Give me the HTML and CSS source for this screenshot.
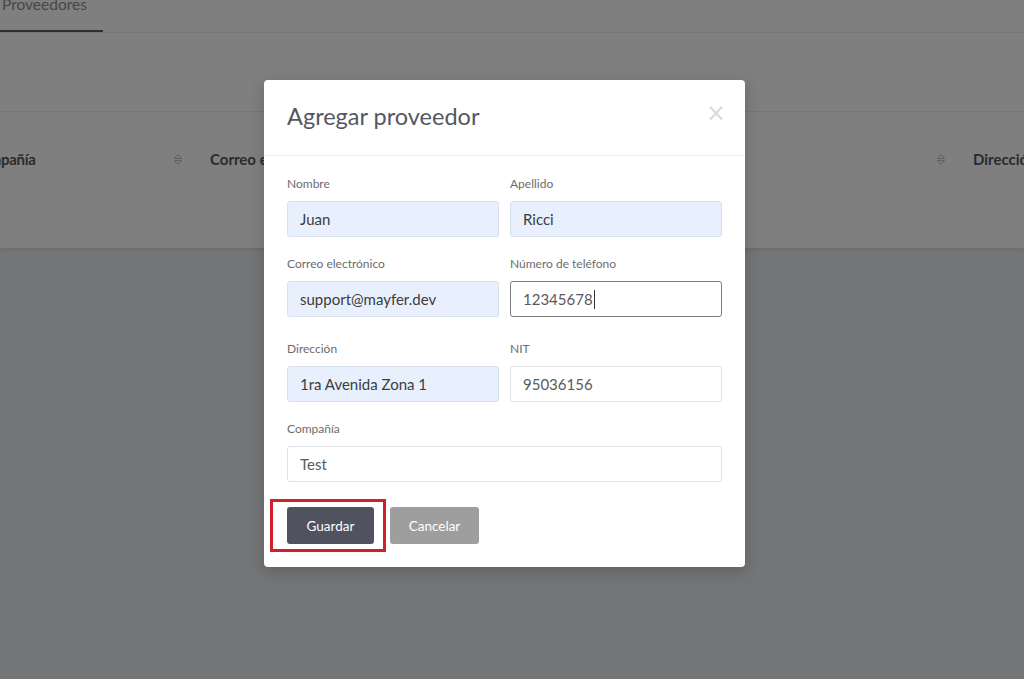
FILE: index.html
```html
<!DOCTYPE html>
<html lang="es">
  <head>
    <meta charset="UTF-8" />
    <meta name="viewport" content="width=device-width, initial-scale=1.0" />
    <title>Proveedores</title>
    <link rel="stylesheet" href="styles.css">
  </head>
  <body>
    <div class="page">
      <div class="card">
        <div class="tabs">
          <div class="tab active">Proveedores</div>
        </div>
        <div class="toolbar"></div>
        <div class="thead">
          <div class="th th-first">
            <span>Compañía</span>
            <svg class="sort" width="10" height="13" viewBox="0 0 10 13"><path d="M1.5 5.5 L5 1.5 L8.5 5.5 Z M1.5 7.5 L5 11.5 L8.5 7.5 Z" fill="none" stroke="#c0c2c8" stroke-width="1"/></svg>
          </div>
          <div class="th th-wide">
            <span>Correo electrónico</span>
            <svg class="sort" width="10" height="13" viewBox="0 0 10 13"><path d="M1.5 5.5 L5 1.5 L8.5 5.5 Z M1.5 7.5 L5 11.5 L8.5 7.5 Z" fill="none" stroke="#c0c2c8" stroke-width="1"/></svg>
          </div>
          <div class="th">
            <span>Dirección</span>
          </div>
        </div>
      </div>
    </div>

    <!-- Modal -->
    <div class="overlay">
      <div class="modal">
        <div class="modal-header">
          <h2>Agregar proveedor</h2>
          <span class="close">&times;</span>
        </div>
        <form class="modal-body" id="providerForm">
          <div class="row">
            <div class="form-group">
              <label for="nombre">Nombre</label>
              <input type="text" id="nombre" class="autofill" value="Juan" />
            </div>
            <div class="form-group">
              <label for="apellido">Apellido</label>
              <input type="text" id="apellido" class="autofill" value="Ricci" />
            </div>
          </div>
          <div class="row row-spaced">
            <div class="form-group">
              <label for="correo">Correo electrónico</label>
              <input type="email" id="correo" class="autofill" value="support@mayfer.dev" />
            </div>
            <div class="form-group">
              <label for="telefono">Número de teléfono</label>
              <div class="field-wrap">
                <input type="text" id="telefono" class="focused" value="12345678" />
                <span class="caret"></span>
              </div>
            </div>
          </div>
          <div class="row">
            <div class="form-group">
              <label for="direccion">Dirección</label>
              <input type="text" id="direccion" class="autofill" value="1ra Avenida Zona 1" />
            </div>
            <div class="form-group">
              <label for="nit">NIT</label>
              <input type="text" id="nit" value="95036156" />
            </div>
          </div>
          <div class="row">
            <div class="form-group full">
              <label for="compania">Compañía</label>
              <input type="text" id="compania" value="Test" />
            </div>
          </div>
          <div class="actions">
            <div class="highlight-wrap">
              <button type="submit" class="btn btn-primary">Guardar</button>
              <span class="highlight"></span>
            </div>
            <button type="button" class="btn btn-secondary">Cancelar</button>
          </div>
        </form>
      </div>
    </div>
  </body>
</html>
```

FILE: styles.css
```css
* {
  margin: 0;
  padding: 0;
  box-sizing: border-box;
}

body {
  font-family: Lato, "Open Sans", sans-serif;
  width: 1024px;
  height: 679px;
  overflow: hidden;
  position: relative;
}

.page {
  height: 679px;
  background: #e8eaef;
  overflow: hidden;
}

.card {
  background: white;
  height: 248px;
  box-shadow: 0 2px 4px rgba(0, 0, 0, 0.08);
}

.tabs {
  height: 33px;
  display: flex;
  align-items: flex-end;
  border-bottom: 1px solid #ededed;
}

.tab {
  font-size: 15.5px;
  line-height: 18px;
  color: #8e8e8e;
  padding: 0 0 17px 2px;
  width: 103px;
}

.tab.active {
  border-bottom: 2px solid #5d5e6a;
}

.toolbar {
  height: 79px;
  border-bottom: 1px solid #eeeeee;
}

.thead {
  display: flex;
  height: 94px;
  align-items: center;
  margin-left: -42px;
}

.th {
  flex-shrink: 0;
  display: flex;
  align-items: center;
  justify-content: space-between;
  font-size: 15px;
  font-weight: 700;
  color: #54565e;
  padding: 0 12px 0 15px;
  white-space: nowrap;
}

.th-first {
  width: 237px;
  letter-spacing: -0.3px;
}

.th-first span {
  margin-left: -2px;
}

.th-wide {
  width: 763px;
}

.sort {
  display: block;
}

/* Modal */
.overlay {
  position: absolute;
  inset: 0;
  background: rgba(0, 0, 0, 0.5);
  padding: 80px 0 0 264px;
}

.modal {
  width: 481px;
  background: white;
  border-radius: 4px;
  box-shadow: 0 4px 16px rgba(0, 0, 0, 0.2);
}

.modal-header {
  height: 76px;
  padding: 0 23px;
  display: flex;
  align-items: center;
  justify-content: space-between;
  border-bottom: 1px solid #ececec;
}

.modal-header h2 {
  font-size: 23.5px;
  font-weight: 400;
  color: #55575f;
  margin-top: -3px;
}

.close {
  font-size: 24px;
  line-height: 1;
  color: #dadada;
  margin-top: -9px;
  margin-right: -4px;
  font-family: "DejaVu Sans", sans-serif;
}

.modal-body {
  padding: 19px 23px 23px;
}

.row {
  display: flex;
  gap: 11px;
  margin-bottom: 18px;
}

.row-spaced {
  margin-bottom: 23px;
}

.form-group {
  width: 212px;
}

.form-group.full {
  width: 100%;
}

label {
  display: block;
  font-size: 12px;
  line-height: 17px;
  color: #6c6c6c;
  margin-bottom: 9px;
}

input {
  display: block;
  width: 100%;
  height: 36px;
  padding: 0 12px;
  font-family: Lato, "Open Sans", sans-serif;
  font-size: 15px;
  color: #5a5a5a;
  background: white;
  border: 1px solid #dfe3e8;
  border-radius: 3px;
  outline: none;
}

input.autofill {
  background: #e8f0fe;
  color: #3c3c3c;
  border-color: #d8e0ec;
}

input.focused {
  border-color: #7c7c80;
}

.field-wrap {
  position: relative;
}

.caret {
  position: absolute;
  left: 84px;
  top: 9px;
  width: 1px;
  height: 19px;
  background: #333;
}

.actions {
  display: flex;
  gap: 16px;
  margin-top: 25px;
}

.highlight-wrap {
  position: relative;
}

.highlight {
  position: absolute;
  left: -17px;
  top: -8px;
  right: -12px;
  bottom: -8px;
  border: 3px solid #d0202e;
}

.btn {
  height: 37px;
  border: none;
  border-radius: 3px;
  color: white;
  font-family: Lato, "Open Sans", sans-serif;
  font-size: 13.5px;
  cursor: pointer;
}

.btn-primary {
  width: 87px;
  background: #505260;
  display: block;
}

.btn-secondary {
  width: 89px;
  background: #9e9e9e;
}
```
